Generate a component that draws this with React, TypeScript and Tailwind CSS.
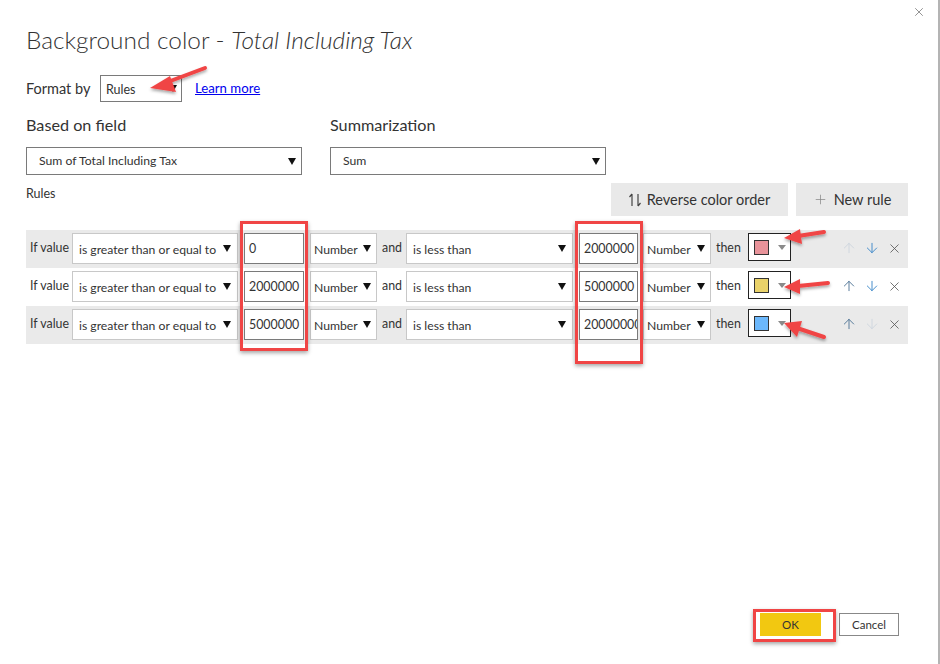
import { ArrowUp, ArrowDown, X, Plus } from "lucide-react";

const font = { fontFamily: 'Lato, "Open Sans", sans-serif' };

function Caret() {
  return (
    <svg width="8" height="7" viewBox="0 0 8 7" className="shrink-0">
      <path d="M0 0 L8 0 L4 7 Z" fill="#111" />
    </svg>
  );
}

function Select({ label, w, border = "border-[#c8c8c8]", pad = "pl-[6px] pr-[6px]" }: { label: string; w: string; border?: string; pad?: string }) {
  return (
    <div className={`${w} h-[31px] bg-white border ${border} flex items-center justify-between ${pad} text-[12.2px] text-[#333]`}>
      <span className="whitespace-nowrap mt-[3px]">{label}</span>
      <Caret />
    </div>
  );
}

function ValueBox({ w, children }: { w: string; children: React.ReactNode }) {
  return (
    <div className={`${w} h-[31px] bg-white border border-[#7a7a7a] flex items-center pl-[4px] pt-[2px] text-[12.4px] text-[#333] overflow-hidden whitespace-nowrap`}>
      {children}
    </div>
  );
}

type Rule = { from: string; to: React.ReactNode; color: string; upOn: boolean; downOn: boolean; grey: boolean };

const rules: Rule[] = [
  { from: "0", to: "2000000", color: "#e8939a", upOn: false, downOn: true, grey: true },
  { from: "2000000", to: "5000000", color: "#e9d26a", upOn: true, downOn: true, grey: false },
  {
    from: "5000000",
    to: (
      <>
        2<span className="inline-block w-px h-[16px] bg-black align-middle" />0000000
      </>
    ),
    color: "#6cb8fc",
    upOn: true,
    downOn: false,
    grey: true,
  },
];

function RuleRow({ r }: { r: Rule }) {
  return (
    <div className={`h-[38px] flex items-start pt-[3px] pl-[4px] ${r.grey ? "bg-[#eaeaea]" : "bg-white"}`}>
      <span className="w-[42px] text-[12.4px] text-[#333] mt-[6px] whitespace-nowrap">If value</span>
      <Select label="is greater than or equal to" w="w-[166px]" />
      <div className="ml-[6px]">
        <ValueBox w="w-[60px]">{r.from}</ValueBox>
      </div>
      <div className="ml-[6px]">
        <Select label="Number" w="w-[67px]" pad="pl-[3px] pr-[5px]" />
      </div>
      <span className="ml-[5px] w-[24px] text-[12.4px] text-[#333] mt-[6px]">and</span>
      <Select label="is less than" w="w-[167px]" />
      <div className="ml-[6px]">
        <ValueBox w="w-[59px]">{r.to}</ValueBox>
      </div>
      <div className="ml-[5px]">
        <Select label="Number" w="w-[68px]" pad="pl-[3px] pr-[5px]" />
      </div>
      <span className="ml-[5px] w-[32px] text-[12.4px] text-[#333] mt-[6px]">then</span>
      <div className="w-[43px] h-[28px] border border-[#222] bg-white flex items-center pl-[5px] gap-[9px]">
        <div className="w-[15px] h-[15px] border border-[#333]" style={{ backgroundColor: r.color }} />
        <svg width="8" height="5" viewBox="0 0 8 5">
          <path d="M0 0 L8 0 L4 5 Z" fill="#8a8a8a" />
        </svg>
      </div>
      <div className="ml-[50px] mt-[7px] flex items-center gap-[7px]">
        <ArrowUp size={16} strokeWidth={1.4} color={r.upOn ? "#4d7394" : "#cdd5de"} />
        <ArrowDown size={16} strokeWidth={1.4} color={r.downOn ? "#3a86c8" : "#cdd5de"} />
        <X size={15} strokeWidth={1.3} color="#555" />
      </div>
    </div>
  );
}

export default function App() {
  return (
    <div style={font} className="relative w-[940px] h-[664px] bg-white border-r-2 border-[#b4b4b4] flex flex-col text-[#333] overflow-hidden">
      <div className="flex justify-between pl-[26px] pr-[12px]">
        <h1 className="mt-[25px] text-[24.4px] leading-[30px] font-light text-[#333] whitespace-nowrap">
          Background color - <span className="italic">Total Including Tax</span>
        </h1>
        <X size={14} strokeWidth={1.2} color="#666" className="mt-[5px]" />
      </div>

      <div className="flex items-center pl-[26px] mt-[20px]">
        <span className="text-[14.5px] w-[74px]">Format by</span>
        <div className="w-[82px] h-[27px] border border-[#7a7a7a] flex items-center justify-between pl-[5px] pr-[4px] text-[12.5px]">
          <span className="mt-[3px]">Rules</span>
          <Caret />
        </div>
        <a className="ml-[13px] text-[13.2px] text-[#0000ee] underline">Learn more</a>
      </div>

      <div className="flex pl-[26px] mt-[12px]">
        <div className="w-[304px]">
          <div className="text-[16.2px] leading-[22px]">Based on field</div>
          <div className="mt-[11px] w-[276px] h-[28px] border border-[#7a7a7a] flex items-center justify-between pl-[12px] pr-[5px] text-[12.2px]">
            <span className="mt-[1px]">Sum of Total Including Tax</span>
            <Caret />
          </div>
        </div>
        <div>
          <div className="text-[16.2px] leading-[22px]">Summarization</div>
          <div className="mt-[11px] w-[276px] h-[28px] border border-[#7a7a7a] flex items-center justify-between pl-[12px] pr-[5px] text-[12.2px]">
            <span className="mt-[1px]">Sum</span>
            <Caret />
          </div>
        </div>
      </div>

      <div className="flex justify-between pl-[26px] pr-[30px] mt-[8px]">
        <span className="text-[12.5px] mt-[2px]">Rules</span>
        <div className="flex gap-[8px]">
          <button className="w-[177px] h-[33px] bg-[#e9e9e9] flex items-center justify-center gap-[6px] text-[14.5px] text-[#333]">
            <svg width="12" height="14" viewBox="0 0 12 14">
              <path d="M3 1 V13 M3 1 L0.5 4" stroke="#444" strokeWidth="1.2" fill="none" />
              <path d="M9 1 V13 M9 13 L11.5 10" stroke="#444" strokeWidth="1.2" fill="none" />
            </svg>
            Reverse color order
          </button>
          <button className="w-[112px] h-[33px] bg-[#e9e9e9] flex items-center justify-center gap-[6px] text-[14.5px] text-[#333]">
            <Plus size={15} strokeWidth={1.2} color="#888" />
            New rule
          </button>
        </div>
      </div>

      <div className="ml-[26px] mr-[30px] mt-[14px] flex flex-col">
        {rules.map((r, i) => (
          <RuleRow key={i} r={r} />
        ))}
      </div>

      <div className="flex-1" />

      <div className="flex justify-end gap-[18px] pr-[39px] pb-[28px]">
        <button className="w-[61px] h-[23px] bg-[#f2c811] text-[11.5px] text-[#333]">OK</button>
        <button className="w-[60px] h-[23px] bg-white border border-[#888] text-[11.5px] text-[#333]">Cancel</button>
      </div>

      {/* annotations */}
      <div className="absolute left-[240px] top-[221px] w-[68px] h-[130px] border-[3px] border-[#f04545] shadow-[0_2px_4px_rgba(0,0,0,0.35)] pointer-events-none" />
      <div className="absolute left-[575px] top-[221px] w-[68px] h-[143px] border-[3px] border-[#f04545] shadow-[0_2px_4px_rgba(0,0,0,0.35)] pointer-events-none" />
      <div className="absolute left-[753px] top-[609px] w-[83px] h-[33px] border-[3px] border-[#f04545] shadow-[0_2px_4px_rgba(0,0,0,0.35)] pointer-events-none" />
      <svg className="absolute inset-0 pointer-events-none" width="940" height="664" viewBox="0 0 940 664">
        <defs>
          <filter id="sh" x="-20%" y="-20%" width="140%" height="160%">
            <feDropShadow dx="0" dy="2" stdDeviation="1.5" floodColor="#000" floodOpacity="0.35" />
          </filter>
        </defs>
        <g filter="url(#sh)" fill="#f04545" stroke="#f04545" strokeLinecap="round">
          <line x1="205" y1="68" x2="165" y2="83" strokeWidth="4" />
          <polygon points="150,88 170,76 176,92" stroke="none" />
          <line x1="824" y1="232" x2="798" y2="236" strokeWidth="4" />
          <polygon points="784,238 800,229 802,244" stroke="none" />
          <line x1="828" y1="283" x2="798" y2="286" strokeWidth="4" />
          <polygon points="784,287 800,279 800,294" stroke="none" />
          <line x1="824" y1="337" x2="797" y2="328" strokeWidth="4" />
          <polygon points="784,323 802,321 797,337" stroke="none" />
        </g>
      </svg>
    </div>
  );
}
